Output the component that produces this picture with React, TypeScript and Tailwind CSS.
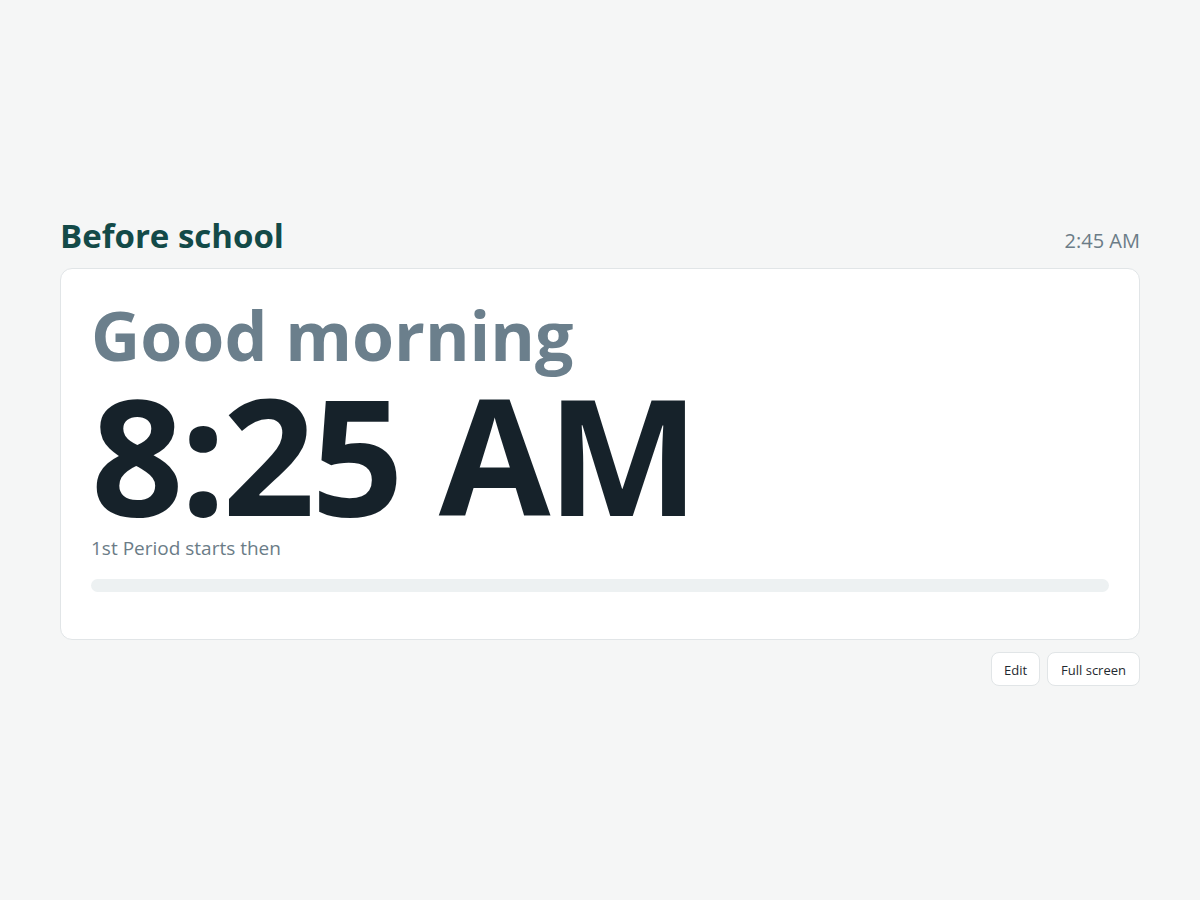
import React from "react";

export default function App() {
  const progress = 0;
  return (
    <div
      className="min-h-screen w-full bg-[#f5f6f6] flex items-center justify-center pt-[2px]"
      style={{ fontFamily: '"Open Sans", "Noto Sans", sans-serif' }}
    >
      <div className="w-[1080px]">
        <div className="flex items-end justify-between mb-[12px]">
          <h1 className="text-[33px] leading-[40px] font-bold text-[#134a48]">Before school</h1>
          <span className="text-[20px] leading-[30px] text-[#6b7c87]">2:45 AM</span>
        </div>
        <div className="rounded-[12px] border border-[#e1e5e7] bg-white px-[30px] pt-[27px] pb-[47px]">
          <p className="text-[68px] leading-[77px] font-bold text-[#6b7f8c]">Good morning</p>
          <p className="text-[162px] leading-[160px] font-bold text-[#16222a] tracking-[-3.7px]">8:25 AM</p>
          <p className="mt-[2px] text-[19px] leading-[26px] text-[#6b7c87]">1st Period starts then</p>
          <div className="mt-[18px] h-[13px] w-full rounded-full bg-[#edf1f2] overflow-hidden">
            <div className="h-full rounded-full bg-[#134a48]" style={{ width: `${progress}%` }} />
          </div>
        </div>
        <div className="mt-[12px] flex justify-end gap-[7px]">
          <button className="h-[34px] rounded-[8px] border border-[#e1e5e7] bg-white px-[12px] text-[13px] leading-[20px] pt-[1px] text-[#1f2a30]">
            Edit
          </button>
          <button className="h-[34px] rounded-[8px] border border-[#e1e5e7] bg-white px-[13px] text-[13px] leading-[20px] pt-[1px] text-[#1f2a30]">
            Full screen
          </button>
        </div>
      </div>
    </div>
  );
}
